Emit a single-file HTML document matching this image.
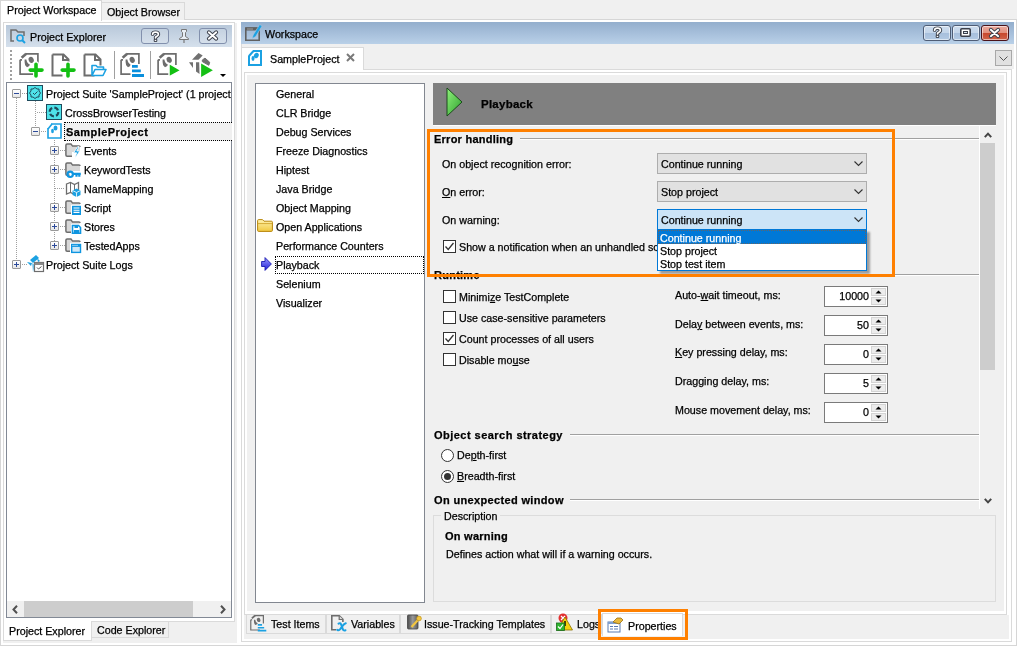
<!DOCTYPE html>
<html><head><meta charset="utf-8">
<style>
*{box-sizing:border-box;margin:0;padding:0}
html,body{width:1017px;height:646px;overflow:hidden;background:#f0f0f0;font-family:"Liberation Sans",sans-serif;font-size:10.7px;color:#000;position:relative}
.a{position:absolute}
.t{position:absolute;white-space:nowrap;line-height:13px;-webkit-text-stroke:0.25px currentColor}
.b{font-weight:bold;font-size:11px;letter-spacing:0.25px}
svg{position:absolute;overflow:visible}
.btn{position:absolute;border:1px solid #4f5d76;border-radius:3px;box-shadow:inset 0 0 0 1px rgba(255,255,255,0.55);background:linear-gradient(#cddcee 0%,#c3d5ea 50%,#a7bfdc 51%,#b3c9e3 100%)}
.cb{position:absolute;width:13px;height:13px;border:1px solid #333;background:#fff}
.combo{position:absolute;width:210px;height:21px;border:1px solid #adadad;background:#e1e1e1}
.spin{position:absolute;width:64px;height:21px;border:1px solid #7a7a7a;background:#fff}
.dot{position:absolute;border:1px dotted #000}
u{text-decoration:underline;text-underline-offset:1px}
.vl{position:absolute;width:1px;border-left:1px dotted #a0a0a0}
.hd{position:absolute;height:1px;border-top:1px dotted #a0a0a0}
.ex{position:absolute;width:9px;height:9px;border:1px solid #a5a5a5;background:linear-gradient(135deg,#fff,#e8e8e8)}
.tab{position:absolute;height:20px;border:1px solid #dadada;background:#f0f0f0}
</style></head><body>
<div style="position:absolute;left:0;top:0;width:1017px;height:646px;will-change:transform">
<div class="a" style="left:0px;top:19px;width:1017px;height:627px;background:#fff;border-left:1px solid #d6d6d6;border-top:1px solid #d6d6d6;border-right:1px solid #d6d6d6;"></div>
<div class="a" style="left:0px;top:645px;width:1017px;height:1px;background:#d6d6d6"></div>
<div class="a" style="left:0px;top:0px;width:102px;height:21px;background:#fff;border:1px solid #d6d6d6;border-bottom:none"></div>
<div class="t " style="left:7px;top:4px;">Project Workspace</div>
<div class="a" style="left:102px;top:2px;width:83px;height:18px;background:#f0f0f0;border:1px solid #d9d9d9;border-bottom:none;border-left:none"></div>
<div class="t " style="left:107px;top:6px;">Object Browser</div>
<div class="a" style="left:3px;top:22px;width:232px;height:600px;border:1px solid #dadada;background:#fff"></div>
<div class="a" style="left:235px;top:23px;width:2px;height:620px;background:#f0f0f0"></div>
<div class="a" style="left:6px;top:25px;width:226px;height:22px;background:linear-gradient(#b8c8da,#d5e0ec)"></div>
<div class="t " style="left:30px;top:31px;">Project Explorer</div>
<div class="a" style="left:6px;top:82px;width:226px;height:536px;border:1px solid #828995;background:#fff"></div>
<div class="a" style="left:7px;top:601px;width:224px;height:16px;background:#f0f0f0"></div>
<div class="a" style="left:24px;top:601px;width:169px;height:16px;background:#cdcdcd"></div>
<div class="a" style="left:3px;top:621px;width:232px;height:1px;background:#dadada"></div>
<div class="a" style="left:3px;top:622px;width:234px;height:21px;background:#f0f0f0"></div>
<div class="a" style="left:3px;top:621px;width:89px;height:20px;background:#fff;border:1px solid #dadada;border-top:none"></div>
<div class="t " style="left:9px;top:625px;">Project Explorer</div>
<div class="a" style="left:92px;top:622px;width:77px;height:16px;background:#f0f0f0;border:1px solid #dadada;border-top:none;border-left:none"></div>
<div class="t " style="left:97px;top:624px;">Code Explorer</div>
<div class="a" style="left:141px;top:28px;width:28px;height:16px;border:1px solid #8290ad;border-radius:3px;background:rgba(255,255,255,0.12)"></div>
<div class="a" style="left:199px;top:28px;width:28px;height:16px;border:1px solid #8290ad;border-radius:3px;background:rgba(255,255,255,0.12)"></div>
<svg style="left:151px;top:31px" width="9" height="11" viewBox="0 0 9 11"><path d="M1.6 3.3Q1.6 1.2 4.5 1.2T7.4 3.3Q7.4 4.6 5.9 5.3T4.5 6.8" fill="none" stroke="#3a3f4a" stroke-width="3.6" stroke-linecap="round"/><rect x="2.7" y="7.9" width="3.6" height="3" rx="0.8" fill="#3a3f4a"/><path d="M1.6 3.3Q1.6 1.2 4.5 1.2T7.4 3.3Q7.4 4.6 5.9 5.3T4.5 6.8" fill="none" stroke="#fff" stroke-width="1.7" stroke-linecap="round"/><rect x="3.7" y="8.8" width="1.6" height="1.3" fill="#fff"/></svg>
<svg style="left:207px;top:31px" width="11" height="9" viewBox="0 0 11 9"><path d="M1.8 1.3l7.4 6.4M9.2 1.3l-7.4 6.4" stroke="#3a3f4a" stroke-width="3.8" stroke-linecap="round"/><path d="M1.8 1.3l7.4 6.4M9.2 1.3l-7.4 6.4" stroke="#fff" stroke-width="1.9" stroke-linecap="round"/></svg>
<svg style="left:178px;top:29px" width="12" height="14" viewBox="0 0 12 14"><path d="M3.5 0.5h5v2l-1 1v4l3 2v1h-9v-1l3-2v-4l-1-1z" fill="#e8eef5" stroke="#777" stroke-width="1"/><path d="M6 10.5v3.5" stroke="#777" stroke-width="1.2"/></svg>
<svg style="left:10px;top:29px" width="17" height="15" viewBox="0 0 17 15"><path d="M4 12H1V1h5l2 2h6v4" fill="none" stroke="#6d6d6d" stroke-width="1.5"/><circle cx="10" cy="9" r="3" fill="none" stroke="#1ba1e2" stroke-width="1.6"/><path d="M12 11l3 3" stroke="#1ba1e2" stroke-width="2"/></svg>
<div class="a" style="left:10px;top:50px;width:2px;height:30px;background:repeating-linear-gradient(#a0a0a0 0 2px,transparent 2px 4px)"></div>
<div class="a" style="left:150px;top:51px;width:1px;height:28px;background:#a0a0a0"></div>
<div class="a" style="left:114px;top:51px;width:1px;height:28px;background:#a0a0a0"></div>
<svg style="left:19px;top:53px" width="24" height="24" viewBox="0 0 24 24"><path d="M6.8 0.9H18.9V12" fill="none" stroke="#6d6d6d" stroke-width="1.7"/><path d="M2.6 4.8L7.2 0.8" stroke="#6d6d6d" stroke-width="2.6"/><path d="M1.1 6.8V21.2H14" fill="none" stroke="#6d6d6d" stroke-width="1.7"/><path d="M1.1 6.8H3" stroke="#6d6d6d" stroke-width="1.7"/><ellipse cx="12.2" cy="6.9" rx="2.5" ry="3.1" fill="#6d6d6d" transform="rotate(-25 12.2 6.9)"/><path d="M5.6 6.6Q5.2 12.8 8 14.2Q10.2 13.5 11 11.8Q7.6 10 7.4 6.6z" fill="#6d6d6d"/><path d="M17 11.2v11.8M11.2 17.1h11.8" stroke="#fff" stroke-width="6" stroke-linecap="round"/><path d="M17 11.2v11.8M11.2 17.1h11.8" stroke="#13c013" stroke-width="3.6" stroke-linecap="round"/></svg>
<svg style="left:51px;top:53px" width="24" height="24" viewBox="0 0 24 24"><path d="M1.5 1.5h11l5 5v6M1.5 1.5v21h10" fill="none" stroke="#6d6d6d" stroke-width="2"/><path d="M12 1.5v5.5h5.5" fill="none" stroke="#6d6d6d" stroke-width="2"/><path d="M17 11.2v11.8M11.2 17.1h11.8" stroke="#fff" stroke-width="6" stroke-linecap="round"/><path d="M17 11.2v11.8M11.2 17.1h11.8" stroke="#13c013" stroke-width="3.6" stroke-linecap="round"/></svg>
<svg style="left:83px;top:53px" width="24" height="24" viewBox="0 0 24 24"><path d="M1.5 1.5h11l5 5v6M1.5 1.5v21h10" fill="none" stroke="#6d6d6d" stroke-width="2"/><path d="M12 1.5v5.5h5.5" fill="none" stroke="#6d6d6d" stroke-width="2"/><path d="M9 22.5v-10h4l1.5 1.5h6v3M9 22.5l3-6h11l-3 6z" fill="#fff" stroke="#1ba1e2" stroke-width="1.6" stroke-linejoin="round"/></svg>
<svg style="left:120px;top:53px" width="24" height="24" viewBox="0 0 24 24"><path d="M6.8 0.9H18.9V12" fill="none" stroke="#6d6d6d" stroke-width="1.7"/><path d="M2.6 4.8L7.2 0.8" stroke="#6d6d6d" stroke-width="2.6"/><path d="M1.1 6.8V21.2H14" fill="none" stroke="#6d6d6d" stroke-width="1.7"/><path d="M1.1 6.8H3" stroke="#6d6d6d" stroke-width="1.7"/><ellipse cx="12.2" cy="6.9" rx="2.5" ry="3.1" fill="#6d6d6d" transform="rotate(-25 12.2 6.9)"/><path d="M5.6 6.6Q5.2 12.8 8 14.2Q10.2 13.5 11 11.8Q7.6 10 7.4 6.6z" fill="#6d6d6d"/><path d="M10.5 11h14v14h-14z" fill="#fff"/><path d="M12 12h5.8v2.8H12zM12 16.5h8.8v2.7H12zM12 21h12v3H12z" fill="#0a8fdc"/></svg>
<svg style="left:157px;top:53px" width="24" height="24" viewBox="0 0 24 24"><path d="M6.8 0.9H18.9V12" fill="none" stroke="#6d6d6d" stroke-width="1.7"/><path d="M2.6 4.8L7.2 0.8" stroke="#6d6d6d" stroke-width="2.6"/><path d="M1.1 6.8V21.2H14" fill="none" stroke="#6d6d6d" stroke-width="1.7"/><path d="M1.1 6.8H3" stroke="#6d6d6d" stroke-width="1.7"/><ellipse cx="12.2" cy="6.9" rx="2.5" ry="3.1" fill="#6d6d6d" transform="rotate(-25 12.2 6.9)"/><path d="M5.6 6.6Q5.2 12.8 8 14.2Q10.2 13.5 11 11.8Q7.6 10 7.4 6.6z" fill="#6d6d6d"/><path d="M12 10.3L24 17.3 12 24z" fill="#13c013" stroke="#fff" stroke-width="1.5"/></svg>
<svg style="left:186px;top:50px" width="30" height="30" viewBox="0 0 30 30"><path d="M6 9.8L12.5 3.1 16.7 5.4 12.5 9.8z" fill="#707070"/><path d="M3 12.3H7V17.9z" fill="#707070"/><path d="M10 12.3H13.2L13.5 23.9 10 21.6z" fill="#707070"/><path d="M16.3 10L19 8.1 23.7 12.3 22.8 15.3 16.3 11.6z" fill="#707070" stroke="#707070" stroke-width="1" stroke-linejoin="round"/><path d="M15.1 13.5L26.9 20.3 15.1 26.9z" fill="#15c015"/></svg>
<svg style="left:220px;top:74px" width="6" height="3" viewBox="0 0 6 3"><path d="M0 0h6l-3 3z" fill="#000"/></svg>
<div class="a" style="left:16px;top:98px;width:1px;height:167px;background:repeating-linear-gradient(#a0a0a0 0 1px,transparent 1px 2px)"></div>
<div class="a" style="left:35px;top:101px;width:1px;height:30px;background:repeating-linear-gradient(#a0a0a0 0 1px,transparent 1px 2px)"></div>
<div class="a" style="left:54px;top:140px;width:1px;height:106px;background:repeating-linear-gradient(#a0a0a0 0 1px,transparent 1px 2px)"></div>
<div class="a" style="left:22px;top:93px;width:5px;height:1px;background:repeating-linear-gradient(90deg,#a0a0a0 0 1px,transparent 1px 2px)"></div>
<div class="a" style="left:37px;top:112px;width:9px;height:1px;background:repeating-linear-gradient(90deg,#a0a0a0 0 1px,transparent 1px 2px)"></div>
<div class="a" style="left:41px;top:131px;width:6px;height:1px;background:repeating-linear-gradient(90deg,#a0a0a0 0 1px,transparent 1px 2px)"></div>
<div class="a" style="left:60px;top:150px;width:5px;height:1px;background:repeating-linear-gradient(90deg,#a0a0a0 0 1px,transparent 1px 2px)"></div>
<div class="a" style="left:60px;top:169px;width:5px;height:1px;background:repeating-linear-gradient(90deg,#a0a0a0 0 1px,transparent 1px 2px)"></div>
<div class="a" style="left:55px;top:188px;width:10px;height:1px;background:repeating-linear-gradient(90deg,#a0a0a0 0 1px,transparent 1px 2px)"></div>
<div class="a" style="left:60px;top:207px;width:5px;height:1px;background:repeating-linear-gradient(90deg,#a0a0a0 0 1px,transparent 1px 2px)"></div>
<div class="a" style="left:60px;top:226px;width:5px;height:1px;background:repeating-linear-gradient(90deg,#a0a0a0 0 1px,transparent 1px 2px)"></div>
<div class="a" style="left:60px;top:245px;width:5px;height:1px;background:repeating-linear-gradient(90deg,#a0a0a0 0 1px,transparent 1px 2px)"></div>
<div class="a" style="left:22px;top:264px;width:5px;height:1px;background:repeating-linear-gradient(90deg,#a0a0a0 0 1px,transparent 1px 2px)"></div>
<div class="a" style="left:12px;top:89px;width:9px;height:9px;border:1px solid #9a9a9a;border-radius:1px;background:linear-gradient(#fff,#e6e6e6)"></div><div class="a" style="left:14px;top:93px;width:5px;height:1px;background:#2c4a9a"></div>
<div class="a" style="left:31px;top:127px;width:9px;height:9px;border:1px solid #9a9a9a;border-radius:1px;background:linear-gradient(#fff,#e6e6e6)"></div><div class="a" style="left:33px;top:131px;width:5px;height:1px;background:#2c4a9a"></div>
<div class="a" style="left:50px;top:146px;width:9px;height:9px;border:1px solid #9a9a9a;border-radius:1px;background:linear-gradient(#fff,#e6e6e6)"></div><div class="a" style="left:52px;top:150px;width:5px;height:1px;background:#2c4a9a"></div><div class="a" style="left:54px;top:148px;width:1px;height:5px;background:#2c4a9a"></div>
<div class="a" style="left:50px;top:165px;width:9px;height:9px;border:1px solid #9a9a9a;border-radius:1px;background:linear-gradient(#fff,#e6e6e6)"></div><div class="a" style="left:52px;top:169px;width:5px;height:1px;background:#2c4a9a"></div><div class="a" style="left:54px;top:167px;width:1px;height:5px;background:#2c4a9a"></div>
<div class="a" style="left:50px;top:203px;width:9px;height:9px;border:1px solid #9a9a9a;border-radius:1px;background:linear-gradient(#fff,#e6e6e6)"></div><div class="a" style="left:52px;top:207px;width:5px;height:1px;background:#2c4a9a"></div><div class="a" style="left:54px;top:205px;width:1px;height:5px;background:#2c4a9a"></div>
<div class="a" style="left:50px;top:222px;width:9px;height:9px;border:1px solid #9a9a9a;border-radius:1px;background:linear-gradient(#fff,#e6e6e6)"></div><div class="a" style="left:52px;top:226px;width:5px;height:1px;background:#2c4a9a"></div><div class="a" style="left:54px;top:224px;width:1px;height:5px;background:#2c4a9a"></div>
<div class="a" style="left:50px;top:241px;width:9px;height:9px;border:1px solid #9a9a9a;border-radius:1px;background:linear-gradient(#fff,#e6e6e6)"></div><div class="a" style="left:52px;top:245px;width:5px;height:1px;background:#2c4a9a"></div><div class="a" style="left:54px;top:243px;width:1px;height:5px;background:#2c4a9a"></div>
<div class="a" style="left:12px;top:260px;width:9px;height:9px;border:1px solid #9a9a9a;border-radius:1px;background:linear-gradient(#fff,#e6e6e6)"></div><div class="a" style="left:14px;top:264px;width:5px;height:1px;background:#2c4a9a"></div><div class="a" style="left:16px;top:262px;width:1px;height:5px;background:#2c4a9a"></div>
<div class="a" style="left:64px;top:122px;width:168px;height:19px;background:#f0f0f0;border:1px dotted #000;border-right:none"></div>
<svg style="left:27px;top:85px" width="16" height="16" viewBox="0 0 16 16"><rect x="0.5" y="0.5" width="15" height="15" fill="#4fe3ea" stroke="#1f4b5c"/><path d="M8 2.5l2 1.5h2v2l1.5 2-1.5 2v2h-2l-2 1.5-2-1.5h-2v-2l-1.5-2 1.5-2v-2h2z" fill="none" stroke="#1f4b5c" stroke-width="1"/><path d="M6 8l1.5 1.5 3-3" fill="none" stroke="#1f4b5c" stroke-width="1"/></svg>
<svg style="left:46px;top:104px" width="16" height="16" viewBox="0 0 16 16"><rect x="0.5" y="0.5" width="15" height="15" fill="#4fe3ea" stroke="#1f4b5c"/><circle cx="8" cy="8" r="4.3" fill="none" stroke="#1f4b5c" stroke-width="2.2" stroke-dasharray="4.5 2.2"/></svg>
<svg style="left:47px;top:123px" width="15" height="16" viewBox="0 0 15 16"><path d="M4 1h10v14H1V5" fill="none" stroke="#1ba1e2" stroke-width="1.6"/><path d="M1 6l4-5" stroke="#1ba1e2" stroke-width="1.6"/><ellipse cx="8.5" cy="5" rx="2" ry="2.6" fill="#1ba1e2"/><ellipse cx="5.5" cy="8" rx="1.4" ry="2.2" fill="#1ba1e2"/></svg>
<svg style="left:65px;top:143px" width="16" height="16" viewBox="0 0 16 16"><path d="M7 13.2H2.1Q0.9 13.2 0.9 12V2.3Q0.9 1.1 2.1 1.1H6L7.6 3.1H14Q15 3.1 15 4.1V9H7z" fill="#d8d8d8"/><path d="M7 13.2H2.1Q0.9 13.2 0.9 12V2.3Q0.9 1.1 2.1 1.1H6L7.6 3.1H14Q15 3.1 15 4.1" fill="none" stroke="#6d6d6d" stroke-width="1.5"/><path d="M12.8 3.5L8.6 9.8h3l-1.8 5.8 5-7.6h-3l2.2-4.5z" fill="#1ba1e2" stroke="#fff" stroke-width="0.8"/></svg>
<svg style="left:65px;top:162px" width="16" height="16" viewBox="0 0 16 16"><path d="M7 13.2H2.1Q0.9 13.2 0.9 12V2.3Q0.9 1.1 2.1 1.1H6L7.6 3.1H14Q15 3.1 15 4.1V9H7z" fill="#d8d8d8"/><path d="M7 13.2H2.1Q0.9 13.2 0.9 12V2.3Q0.9 1.1 2.1 1.1H6L7.6 3.1H14Q15 3.1 15 4.1" fill="none" stroke="#6d6d6d" stroke-width="1.5"/><path d="M4.5 9.5h11.5v5H4.5z" fill="#fff"/><circle cx="5.2" cy="12.3" r="2.7" fill="none" stroke="#0e95e0" stroke-width="2.2"/><path d="M7.5 11.8h8.3M11.5 12v2.8M14.3 12v2.8" stroke="#0e95e0" stroke-width="2.2"/></svg>
<svg style="left:65px;top:181px" width="16" height="16" viewBox="0 0 16 16"><path d="M1.5 3l4-1.5 4 2 4-2v10l-4 2-4-2-4 1.5z" fill="#fff" stroke="#6d6d6d" stroke-width="1.3"/><path d="M5.5 1.5v10M9.5 3.5v10" stroke="#6d6d6d" stroke-width="1"/><path d="M7.5 9.5l4-2 4 2v4.5l-4 2-4-2z" fill="#1ba1e2"/><path d="M7.5 9.5l4 2 4-2M11.5 11.5v4.5" stroke="#fff" stroke-width="0.8" fill="none"/></svg>
<svg style="left:65px;top:200px" width="16" height="16" viewBox="0 0 16 16"><path d="M7 13.2H2.1Q0.9 13.2 0.9 12V2.3Q0.9 1.1 2.1 1.1H6L7.6 3.1H14Q15 3.1 15 4.1V9H7z" fill="#d8d8d8"/><path d="M7 13.2H2.1Q0.9 13.2 0.9 12V2.3Q0.9 1.1 2.1 1.1H6L7.6 3.1H14Q15 3.1 15 4.1" fill="none" stroke="#6d6d6d" stroke-width="1.5"/><rect x="6" y="4.8" width="11" height="11" fill="#fff"/><rect x="7" y="5.8" width="9" height="9.2" fill="#0e95e0"/><path d="M8.5 8h6M8.5 10.2h6M8.5 12.4h6" stroke="#fff" stroke-width="1.1"/></svg>
<svg style="left:65px;top:219px" width="16" height="16" viewBox="0 0 16 16"><path d="M7 13.2H2.1Q0.9 13.2 0.9 12V2.3Q0.9 1.1 2.1 1.1H6L7.6 3.1H14Q15 3.1 15 4.1V9H7z" fill="#d8d8d8"/><path d="M7 13.2H2.1Q0.9 13.2 0.9 12V2.3Q0.9 1.1 2.1 1.1H6L7.6 3.1H14Q15 3.1 15 4.1" fill="none" stroke="#6d6d6d" stroke-width="1.5"/><rect x="6" y="4.8" width="11" height="11" fill="#fff"/><path d="M7.5 6.5h6l2 2v5.8h-8z" fill="#fff" stroke="#0e95e0" stroke-width="1.6"/><rect x="9.5" y="6" width="3.5" height="3" fill="#0e95e0"/><rect x="8.8" y="11" width="5.5" height="3.5" fill="#0e95e0"/></svg>
<svg style="left:65px;top:238px" width="16" height="16" viewBox="0 0 16 16"><path d="M7 13.2H2.1Q0.9 13.2 0.9 12V2.3Q0.9 1.1 2.1 1.1H6L7.6 3.1H14Q15 3.1 15 4.1V9H7z" fill="#d8d8d8"/><path d="M7 13.2H2.1Q0.9 13.2 0.9 12V2.3Q0.9 1.1 2.1 1.1H6L7.6 3.1H14Q15 3.1 15 4.1" fill="none" stroke="#6d6d6d" stroke-width="1.5"/><rect x="5" y="4.8" width="12" height="11" fill="#fff"/><rect x="6.7" y="6.6" width="8.8" height="7.8" fill="#cfe8f8" stroke="#0e95e0" stroke-width="1.4"/><rect x="6" y="5.9" width="10" height="3" fill="#0e95e0"/><path d="M7.5 7.4h1M9.5 7.4h1M11.5 7.4h1" stroke="#fff" stroke-width="1"/></svg>
<svg style="left:27px;top:255px" width="17" height="17" viewBox="0 0 17 17"><path d="M3 5l6-5 3 3-6 5z" fill="#1ba1e2"/><path d="M0 7l4 4 1-3z" fill="#1ba1e2"/><path d="M5 8l1 9 2-7z" fill="#1ba1e2" opacity="0.6"/><path d="M10 3l3 3-2 1z" fill="#1ba1e2"/><rect x="7.5" y="7.5" width="9" height="9" fill="#fff" stroke="#6d6d6d" stroke-width="1.2"/><rect x="7.5" y="7.5" width="9" height="2.5" fill="#8a8a8a"/><path d="M10 12.5l1.5 1.5 3-2.5" fill="none" stroke="#555" stroke-width="1"/></svg>
<div class="t " style="left:46px;top:88px;max-width:185px;overflow:hidden">Project Suite &#x27;SampleProject&#x27; (1 project</div>
<div class="t " style="left:65px;top:107px;max-width:166px;overflow:hidden">CrossBrowserTesting</div>
<div class="t b" style="left:66px;top:126px;letter-spacing:0.45px">SampleProject</div>
<div class="t " style="left:84px;top:145px;max-width:147px;overflow:hidden">Events</div>
<div class="t " style="left:84px;top:164px;max-width:147px;overflow:hidden">KeywordTests</div>
<div class="t " style="left:84px;top:183px;max-width:147px;overflow:hidden">NameMapping</div>
<div class="t " style="left:84px;top:202px;max-width:147px;overflow:hidden">Script</div>
<div class="t " style="left:84px;top:221px;max-width:147px;overflow:hidden">Stores</div>
<div class="t " style="left:84px;top:240px;max-width:147px;overflow:hidden">TestedApps</div>
<div class="t " style="left:46px;top:259px;max-width:185px;overflow:hidden">Project Suite Logs</div>
<svg style="left:12px;top:605px" width="6" height="9" viewBox="0 0 6 9"><path d="M5 0.8L1.5 4.5 5 8.2" fill="none" stroke="#505050" stroke-width="2"/></svg>
<svg style="left:220px;top:605px" width="6" height="9" viewBox="0 0 6 9"><path d="M1 0.8l3.5 3.7L1 8.2" fill="none" stroke="#505050" stroke-width="2"/></svg>
<div class="a" style="left:241px;top:22px;width:771px;height:620px;border:1px solid #dadada;border-top:none;background:#fff"></div>
<div class="a" style="left:241px;top:22px;width:773px;height:22px;background:linear-gradient(#93aecd,#b9d0e8)"></div>
<div class="t " style="left:265px;top:28px;">Workspace</div>
<div class="btn" style="left:923px;top:25px;width:28px;height:16px"></div>
<div class="btn" style="left:952px;top:25px;width:28px;height:16px"></div>
<div class="btn" style="left:981px;top:25px;width:28px;height:16px;border-color:#4a1219;background:linear-gradient(#eba99d 0%,#e2907e 50%,#c8472d 51%,#d0644c 100%)"></div>
<div class="a" style="left:242px;top:44px;width:772px;height:25px;background:#f0f0f0"></div>
<div class="a" style="left:363px;top:69px;width:649px;height:1px;background:#dadada"></div>
<div class="a" style="left:242px;top:47px;width:122px;height:23px;background:#fff;border-right:1px solid #dadada;border-top:1px solid #dadada"></div>
<div class="t " style="left:270px;top:53px;">SampleProject</div>
<div class="a" style="left:995px;top:50px;width:17px;height:16px;border:1px solid #a8a8a8;background:#e1e1e1"></div>
<div class="a" style="left:244px;top:72px;width:763px;height:543px;border:1px solid #dadada;background:#fff"></div>
<div class="a" style="left:247px;top:75px;width:757px;height:536px;background:#f0f0f0"></div>
<div class="a" style="left:244px;top:615px;width:765px;height:24px;background:#f0f0f0"></div>
<div class="a" style="left:255px;top:83px;width:170px;height:520px;border:1px solid #828790;background:#fff"></div>
<div class="t " style="left:276px;top:88px;">General</div>
<div class="t " style="left:276px;top:107px;">CLR Bridge</div>
<div class="t " style="left:276px;top:126px;">Debug Services</div>
<div class="t " style="left:276px;top:145px;">Freeze Diagnostics</div>
<div class="t " style="left:276px;top:164px;">Hiptest</div>
<div class="t " style="left:276px;top:183px;">Java Bridge</div>
<div class="t " style="left:276px;top:202px;">Object Mapping</div>
<div class="t " style="left:276px;top:221px;">Open Applications</div>
<div class="t " style="left:276px;top:240px;">Performance Counters</div>
<div class="t " style="left:276px;top:259px;">Playback</div>
<div class="t " style="left:276px;top:278px;">Selenium</div>
<div class="t " style="left:276px;top:297px;">Visualizer</div>
<div class="a" style="left:433px;top:83px;width:563px;height:42px;background:#808080"></div>
<div class="t b" style="left:481px;top:98px;font-size:11.5px">Playback</div>
<div class="t b" style="left:434px;top:133px;">Error handling</div>
<div class="a" style="left:520px;top:138px;width:459px;height:1px;background:#a0a0a0;box-shadow:0 1px 0 #fff"></div>
<div class="t " style="left:442px;top:158px;">On object recognition error:</div>
<div class="t " style="left:442px;top:186px;"><u>O</u>n error:</div>
<div class="t " style="left:442px;top:214px;">On warning:</div>
<div class="combo" style="left:657px;top:153px"></div>
<div class="combo" style="left:657px;top:181px"></div>
<div class="combo" style="left:657px;top:209px;border-color:#0078d7;background:#cce4f7"></div>
<div class="t " style="left:661px;top:158px;">Continue running</div>
<div class="t " style="left:661px;top:186px;">Stop project</div>
<div class="t " style="left:661px;top:214px;">Continue running</div>
<div class="cb" style="left:443px;top:240px"></div>
<div class="t " style="left:459px;top:241px;">Show a notification when an unhandled script exception occurs</div>
<div class="a" style="left:657px;top:229px;width:210px;height:42px;background:#fff;border:1px solid #0078d7;box-shadow:3px 3px 2px rgba(0,0,0,0.35)"></div>
<div class="a" style="left:658px;top:230px;width:208px;height:14px;background:#0078d7"></div>
<div class="a" style="left:658px;top:230px;width:208px;height:14px;border:1px dotted #fff"></div>
<div class="a" style="left:658px;top:230px;width:208px;height:14px;border:1px dotted #000;opacity:0.6"></div>
<div class="t " style="left:660px;top:232px;color:#fff">Continue running</div>
<div class="t " style="left:660px;top:245px;">Stop project</div>
<div class="t " style="left:660px;top:258px;">Stop test item</div>
<div class="t b" style="left:434px;top:269px;">Runtime</div>
<div class="a" style="left:490px;top:274px;width:489px;height:1px;background:#a0a0a0;box-shadow:0 1px 0 #fff"></div>
<div class="cb" style="left:443px;top:290px"></div>
<div class="t " style="left:459px;top:291px;">Minimi<u>z</u>e TestComplete</div>
<div class="cb" style="left:443px;top:311px"></div>
<div class="t " style="left:459px;top:312px;">Use case-sensitive parameters</div>
<div class="cb" style="left:443px;top:332px"></div>
<div class="t " style="left:459px;top:333px;">Count processes of all users</div>
<div class="cb" style="left:443px;top:353px"></div>
<div class="t " style="left:459px;top:354px;">Disable mo<u>u</u>se</div>
<div class="t " style="left:675px;top:289px;">Auto-<u>w</u>ait timeout, ms:</div>
<div class="spin" style="left:824px;top:286px"></div>
<div class="t" style="left:826px;top:290px;width:43px;text-align:right">10000</div>
<div class="t " style="left:675px;top:318px;">Dela<u>y</u> between events, ms:</div>
<div class="spin" style="left:824px;top:315px"></div>
<div class="t" style="left:826px;top:319px;width:43px;text-align:right">50</div>
<div class="t " style="left:675px;top:346px;"><u>K</u>ey pressing delay, ms:</div>
<div class="spin" style="left:824px;top:344px"></div>
<div class="t" style="left:826px;top:348px;width:43px;text-align:right">0</div>
<div class="t " style="left:675px;top:375px;">Dragging delay, ms:</div>
<div class="spin" style="left:824px;top:373px"></div>
<div class="t" style="left:826px;top:377px;width:43px;text-align:right">5</div>
<div class="t " style="left:675px;top:404px;">Mouse movement delay, ms:</div>
<div class="spin" style="left:824px;top:402px"></div>
<div class="t" style="left:826px;top:406px;width:43px;text-align:right">0</div>
<div class="t b" style="left:434px;top:429px;letter-spacing:0.47px">Object search strategy</div>
<div class="a" style="left:570px;top:434px;width:409px;height:1px;background:#a0a0a0;box-shadow:0 1px 0 #fff"></div>
<div class="t " style="left:457px;top:449px;">De<u>p</u>th-first</div>
<div class="t " style="left:457px;top:470px;"><u>B</u>readth-first</div>
<div class="t b" style="left:434px;top:494px;letter-spacing:0.35px">On unexpected window</div>
<div class="a" style="left:570px;top:499px;width:409px;height:1px;background:#a0a0a0;box-shadow:0 1px 0 #fff"></div>
<div class="a" style="left:979px;top:125px;width:1px;height:384px;background:#fff"></div>
<div class="a" style="left:433px;top:125px;width:563px;height:1px;background:#fff"></div>
<div class="a" style="left:980px;top:126px;width:16px;height:383px;background:#f0f0f0"></div>
<div class="a" style="left:980px;top:143px;width:15px;height:227px;background:#cdcdcd"></div>
<div class="a" style="left:433px;top:515px;width:563px;height:87px;border:1px solid #dcdcdc"></div>
<div class="a" style="left:441px;top:509px;width:59px;height:12px;background:#f0f0f0"></div>
<div class="t " style="left:444px;top:510px;">Description</div>
<div class="t b" style="left:445px;top:530px;">On warning</div>
<div class="t " style="left:446px;top:548px;">Defines action what will if a warning occurs.</div>
<div class="a" style="left:246px;top:614px;width:80px;height:20px;border:1px solid #dadada;background:#f0f0f0"></div>
<div class="t " style="left:271px;top:618px;">Test Items</div>
<div class="a" style="left:326px;top:614px;width:74px;height:20px;border:1px solid #dadada;background:#f0f0f0"></div>
<div class="t " style="left:351px;top:618px;">Variables</div>
<div class="a" style="left:400px;top:614px;width:151px;height:20px;border:1px solid #dadada;background:#f0f0f0"></div>
<div class="t " style="left:424px;top:618px;">Issue-Tracking Templates</div>
<div class="a" style="left:551px;top:614px;width:51px;height:20px;border:1px solid #dadada;background:#f0f0f0"></div>
<div class="t " style="left:577px;top:618px;">Logs</div>
<div class="a" style="left:602px;top:613px;width:81px;height:23px;border:1px solid #dadada;border-bottom:none;background:#fff"></div>
<div class="t " style="left:628px;top:620px;">Properties</div>
<div class="a" style="left:427px;top:129px;width:468px;height:148px;border:3px solid #ff8000"></div>
<div class="a" style="left:598px;top:609px;width:90px;height:31px;border:3px solid #ff8000"></div>
<svg style="left:245px;top:22px" width="17" height="20" viewBox="0 0 17 20"><path d="M0.8 6h13.4v12.2H0.8z" fill="none" stroke="#606060" stroke-width="1.6"/><rect x="0.8" y="5.5" width="13.4" height="3" fill="#606060"/><path d="M2.5 7h1M4.5 7h1M6.5 7h1" stroke="#ddd" stroke-width="1"/><path d="M7.2 16.5l1-3.5 6.5-10.5 2.4 1.6-6.5 10.5z" fill="#1ba1e2" stroke="#b0c6df" stroke-width="0.6"/></svg>
<svg style="left:933px;top:27px" width="9" height="11" viewBox="0 0 9 11"><path d="M1.6 3.3Q1.6 1.2 4.5 1.2T7.4 3.3Q7.4 4.6 5.9 5.3T4.5 6.8" fill="none" stroke="#3a3f4a" stroke-width="3.6" stroke-linecap="round"/><rect x="2.7" y="7.9" width="3.6" height="3" rx="0.8" fill="#3a3f4a"/><path d="M1.6 3.3Q1.6 1.2 4.5 1.2T7.4 3.3Q7.4 4.6 5.9 5.3T4.5 6.8" fill="none" stroke="#fff" stroke-width="1.7" stroke-linecap="round"/><rect x="3.7" y="8.8" width="1.6" height="1.3" fill="#fff"/></svg>
<svg style="left:960px;top:28px" width="11" height="9" viewBox="0 0 11 9"><rect x="0.8" y="0.8" width="9.4" height="7.4" rx="1" fill="#fff" stroke="#3a3f4a" stroke-width="1.6"/><rect x="3.5" y="3.5" width="4" height="2" fill="#d8e4f0" stroke="#3a3f4a" stroke-width="1"/></svg>
<svg style="left:989px;top:28px" width="11" height="10" viewBox="0 0 11 9"><path d="M1.8 1.3l7.4 6.4M9.2 1.3l-7.4 6.4" stroke="#3a3f4a" stroke-width="3.8" stroke-linecap="round"/><path d="M1.8 1.3l7.4 6.4M9.2 1.3l-7.4 6.4" stroke="#fff" stroke-width="1.9" stroke-linecap="round"/></svg>
<svg style="left:248px;top:50px" width="14" height="16" viewBox="0 0 14 16"><path d="M5 1h8v14H1V5.5" fill="none" stroke="#1ba1e2" stroke-width="2"/><path d="M1 6l4.5-5" stroke="#1ba1e2" stroke-width="2"/><ellipse cx="8.3" cy="5.5" rx="2.3" ry="2.8" fill="#1ba1e2" transform="rotate(30 8.3 5.5)"/><ellipse cx="5" cy="8.5" rx="1.5" ry="2.4" fill="#1ba1e2"/></svg>
<svg style="left:346px;top:53px" width="9" height="9" viewBox="0 0 9 9"><path d="M1 1l7 7M8 1l-7 7" stroke="#7a7a7a" stroke-width="2"/></svg>
<svg style="left:999px;top:56px" width="9" height="5" viewBox="0 0 9 5"><path d="M0.5 0.5l4 4 4-4" fill="none" stroke="#555" stroke-width="1"/></svg>
<svg style="left:257px;top:219px" width="16" height="13" viewBox="0 0 16 13"><defs><linearGradient id="fd" x1="0" y1="0" x2="0" y2="1"><stop offset="0" stop-color="#fff3b0"/><stop offset="1" stop-color="#f0c840"/></linearGradient></defs><path d="M0.6 11.4V1.6Q0.6 0.6 1.6 0.6H5.5L7 2.2H14.4Q15.4 2.2 15.4 3.2V11.4Q15.4 12.4 14.4 12.4H1.6Q0.6 12.4 0.6 11.4z" fill="url(#fd)" stroke="#b8860b" stroke-width="1"/><path d="M1 4.6H15" stroke="#c99a20" stroke-width="0.8"/></svg>
<svg style="left:261px;top:257px" width="11" height="14" viewBox="0 0 11 14"><defs><linearGradient id="ar" x1="0" y1="0" x2="0" y2="1"><stop offset="0" stop-color="#9a9aff"/><stop offset="1" stop-color="#2020d8"/></linearGradient></defs><path d="M4 0.6L10.4 7 4 13.4V9.5H0.6V4.5H4z" fill="url(#ar)" stroke="#1a1ab0" stroke-width="0.9" stroke-linejoin="round"/></svg>
<div class="a" style="left:275px;top:256px;width:149px;height:18px;border:1px dotted #000"></div>
<svg style="left:446px;top:87px" width="17" height="30" viewBox="0 0 17 30"><defs><linearGradient id="ga" x1="0" y1="0" x2="1" y2="1"><stop offset="0" stop-color="#8ef27a"/><stop offset="1" stop-color="#2f9f2f"/></linearGradient></defs><path d="M1 1l15 14L1 29z" fill="url(#ga)" stroke="#1c4a1c" stroke-width="1"/></svg>
<svg style="left:854px;top:161px" width="9" height="6" viewBox="0 0 9 6"><path d="M0.5 0.5l4 4 4-4" fill="none" stroke="#333" stroke-width="1.1"/></svg>
<svg style="left:854px;top:189px" width="9" height="6" viewBox="0 0 9 6"><path d="M0.5 0.5l4 4 4-4" fill="none" stroke="#333" stroke-width="1.1"/></svg>
<svg style="left:854px;top:217px" width="9" height="6" viewBox="0 0 9 6"><path d="M0.5 0.5l4 4 4-4" fill="none" stroke="#333" stroke-width="1.1"/></svg>
<svg style="left:443px;top:240px" width="13" height="13" viewBox="0 0 13 13"><path d="M2.5 6.5l2.7 3 5.3-6.5" fill="none" stroke="#333" stroke-width="1.3"/></svg>
<svg style="left:443px;top:332px" width="13" height="13" viewBox="0 0 13 13"><path d="M2.5 6.5l2.7 3 5.3-6.5" fill="none" stroke="#333" stroke-width="1.3"/></svg>
<div class="a" style="left:871px;top:288px;width:15px;height:8px;background:#ececec;border:1px solid #d4d4d4"></div>
<div class="a" style="left:871px;top:297px;width:15px;height:8px;background:#ececec;border:1px solid #d4d4d4"></div>
<svg style="left:875px;top:290px" width="7" height="4" viewBox="0 0 7 4"><path d="M0.5 3.5l3-3 3 3z" fill="#000"/></svg>
<svg style="left:875px;top:299px" width="7" height="4" viewBox="0 0 7 4"><path d="M0.5 0.5l3 3 3-3z" fill="#000"/></svg>
<div class="a" style="left:871px;top:317px;width:15px;height:8px;background:#ececec;border:1px solid #d4d4d4"></div>
<div class="a" style="left:871px;top:326px;width:15px;height:8px;background:#ececec;border:1px solid #d4d4d4"></div>
<svg style="left:875px;top:319px" width="7" height="4" viewBox="0 0 7 4"><path d="M0.5 3.5l3-3 3 3z" fill="#000"/></svg>
<svg style="left:875px;top:328px" width="7" height="4" viewBox="0 0 7 4"><path d="M0.5 0.5l3 3 3-3z" fill="#000"/></svg>
<div class="a" style="left:871px;top:346px;width:15px;height:8px;background:#ececec;border:1px solid #d4d4d4"></div>
<div class="a" style="left:871px;top:355px;width:15px;height:8px;background:#ececec;border:1px solid #d4d4d4"></div>
<svg style="left:875px;top:348px" width="7" height="4" viewBox="0 0 7 4"><path d="M0.5 3.5l3-3 3 3z" fill="#000"/></svg>
<svg style="left:875px;top:357px" width="7" height="4" viewBox="0 0 7 4"><path d="M0.5 0.5l3 3 3-3z" fill="#000"/></svg>
<div class="a" style="left:871px;top:375px;width:15px;height:8px;background:#ececec;border:1px solid #d4d4d4"></div>
<div class="a" style="left:871px;top:384px;width:15px;height:8px;background:#ececec;border:1px solid #d4d4d4"></div>
<svg style="left:875px;top:377px" width="7" height="4" viewBox="0 0 7 4"><path d="M0.5 3.5l3-3 3 3z" fill="#000"/></svg>
<svg style="left:875px;top:386px" width="7" height="4" viewBox="0 0 7 4"><path d="M0.5 0.5l3 3 3-3z" fill="#000"/></svg>
<div class="a" style="left:871px;top:404px;width:15px;height:8px;background:#ececec;border:1px solid #d4d4d4"></div>
<div class="a" style="left:871px;top:413px;width:15px;height:8px;background:#ececec;border:1px solid #d4d4d4"></div>
<svg style="left:875px;top:406px" width="7" height="4" viewBox="0 0 7 4"><path d="M0.5 3.5l3-3 3 3z" fill="#000"/></svg>
<svg style="left:875px;top:415px" width="7" height="4" viewBox="0 0 7 4"><path d="M0.5 0.5l3 3 3-3z" fill="#000"/></svg>
<div class="a" style="left:441px;top:449px;width:13px;height:13px;border-radius:50%;border:1px solid #333;background:#fff"></div>
<div class="a" style="left:441px;top:470px;width:13px;height:13px;border-radius:50%;border:1px solid #333;background:#fff"></div>
<div class="a" style="left:444px;top:473px;width:7px;height:7px;border-radius:50%;background:#333"></div>
<svg style="left:984px;top:132px" width="8" height="6" viewBox="0 0 8 6"><path d="M0.8 5.2l3.2-3.5 3.2 3.5" fill="none" stroke="#444" stroke-width="2"/></svg>
<svg style="left:984px;top:498px" width="8" height="6" viewBox="0 0 8 6"><path d="M0.8 0.8l3.2 3.5 3.2-3.5" fill="none" stroke="#444" stroke-width="2"/></svg>
<svg style="left:250px;top:615px" width="17" height="17" viewBox="0 0 24 24"><path d="M6.8 0.9H18.9V12" fill="none" stroke="#6d6d6d" stroke-width="1.7"/><path d="M2.6 4.8L7.2 0.8" stroke="#6d6d6d" stroke-width="2.6"/><path d="M1.1 6.8V21.2H14" fill="none" stroke="#6d6d6d" stroke-width="1.7"/><path d="M1.1 6.8H3" stroke="#6d6d6d" stroke-width="1.7"/><ellipse cx="12.2" cy="6.9" rx="2.5" ry="3.1" fill="#6d6d6d" transform="rotate(-25 12.2 6.9)"/><path d="M5.6 6.6Q5.2 12.8 8 14.2Q10.2 13.5 11 11.8Q7.6 10 7.4 6.6z" fill="#6d6d6d"/><path d="M11 14h6M11 18h9M11 22h12" stroke="#1ba1e2" stroke-width="2.4"/></svg>
<svg style="left:330px;top:614px" width="19" height="19" viewBox="0 0 19 19"><path d="M6 15.8H1.8V1.8h7.5l3.6 3.6V8" fill="none" stroke="#6d6d6d" stroke-width="1.6"/><path d="M9.2 1.8v3.7h3.7" fill="#ddd" stroke="#6d6d6d" stroke-width="1.2"/><path d="M8.5 9.6q1.8-1 2.6 0.8l1.8 5q0.6 1.6 2.6 0.8M15.8 9.2q-1.6 0.4-3.2 2.6l-2.4 3.4q-1.2 1.6-3 0.6" fill="none" stroke="#1ba1e2" stroke-width="2" stroke-linecap="round"/></svg>
<svg style="left:407px;top:614px" width="15" height="16" viewBox="0 0 15 16"><defs><linearGradient id="bk" x1="0" x2="1"><stop offset="0" stop-color="#4a4a4a"/><stop offset="0.5" stop-color="#9a9a9a"/><stop offset="1" stop-color="#5a5a5a"/></linearGradient></defs><rect x="0.5" y="1" width="10.5" height="14" rx="1" fill="url(#bk)" stroke="#444" stroke-width="0.8"/><path d="M4.5 13l6.5-7" stroke="#f3c640" stroke-width="2.2"/><circle cx="12" cy="4.5" r="2.4" fill="#f3c640" stroke="#b88a10" stroke-width="0.6"/></svg>
<svg style="left:556px;top:613px" width="17" height="18" viewBox="0 0 17 18"><circle cx="7" cy="5" r="4.5" fill="#e23030"/><path d="M5 3l4 4M9 3l-4 4" stroke="#fff" stroke-width="1.2"/><path d="M9 4l7.5 13H1.5z" fill="#f5d10f" stroke="#8a7000" stroke-width="0.8"/><path d="M9 8v5" stroke="#000" stroke-width="1.4"/><rect x="0.5" y="10" width="8" height="7.5" fill="#2fb52f" stroke="#1a6a1a" stroke-width="0.8"/><path d="M2 13.5l2 2 3-4" fill="none" stroke="#fff" stroke-width="1.2"/></svg>
<svg style="left:607px;top:617px" width="17" height="16" viewBox="0 0 17 16"><rect x="1" y="5" width="12" height="10" fill="#fff" stroke="#5a7ab0" stroke-width="1"/><rect x="1" y="5" width="12" height="2" fill="#7fa0d0"/><path d="M3 9.5h3M7 9.5h4M3 12h3M7 12h4" stroke="#5a7ab0" stroke-width="1"/><path d="M6 5l4-4h4l2 2-4 4z" fill="#e8b83a" stroke="#9a7010" stroke-width="0.8"/></svg>
</div>
</body></html>
